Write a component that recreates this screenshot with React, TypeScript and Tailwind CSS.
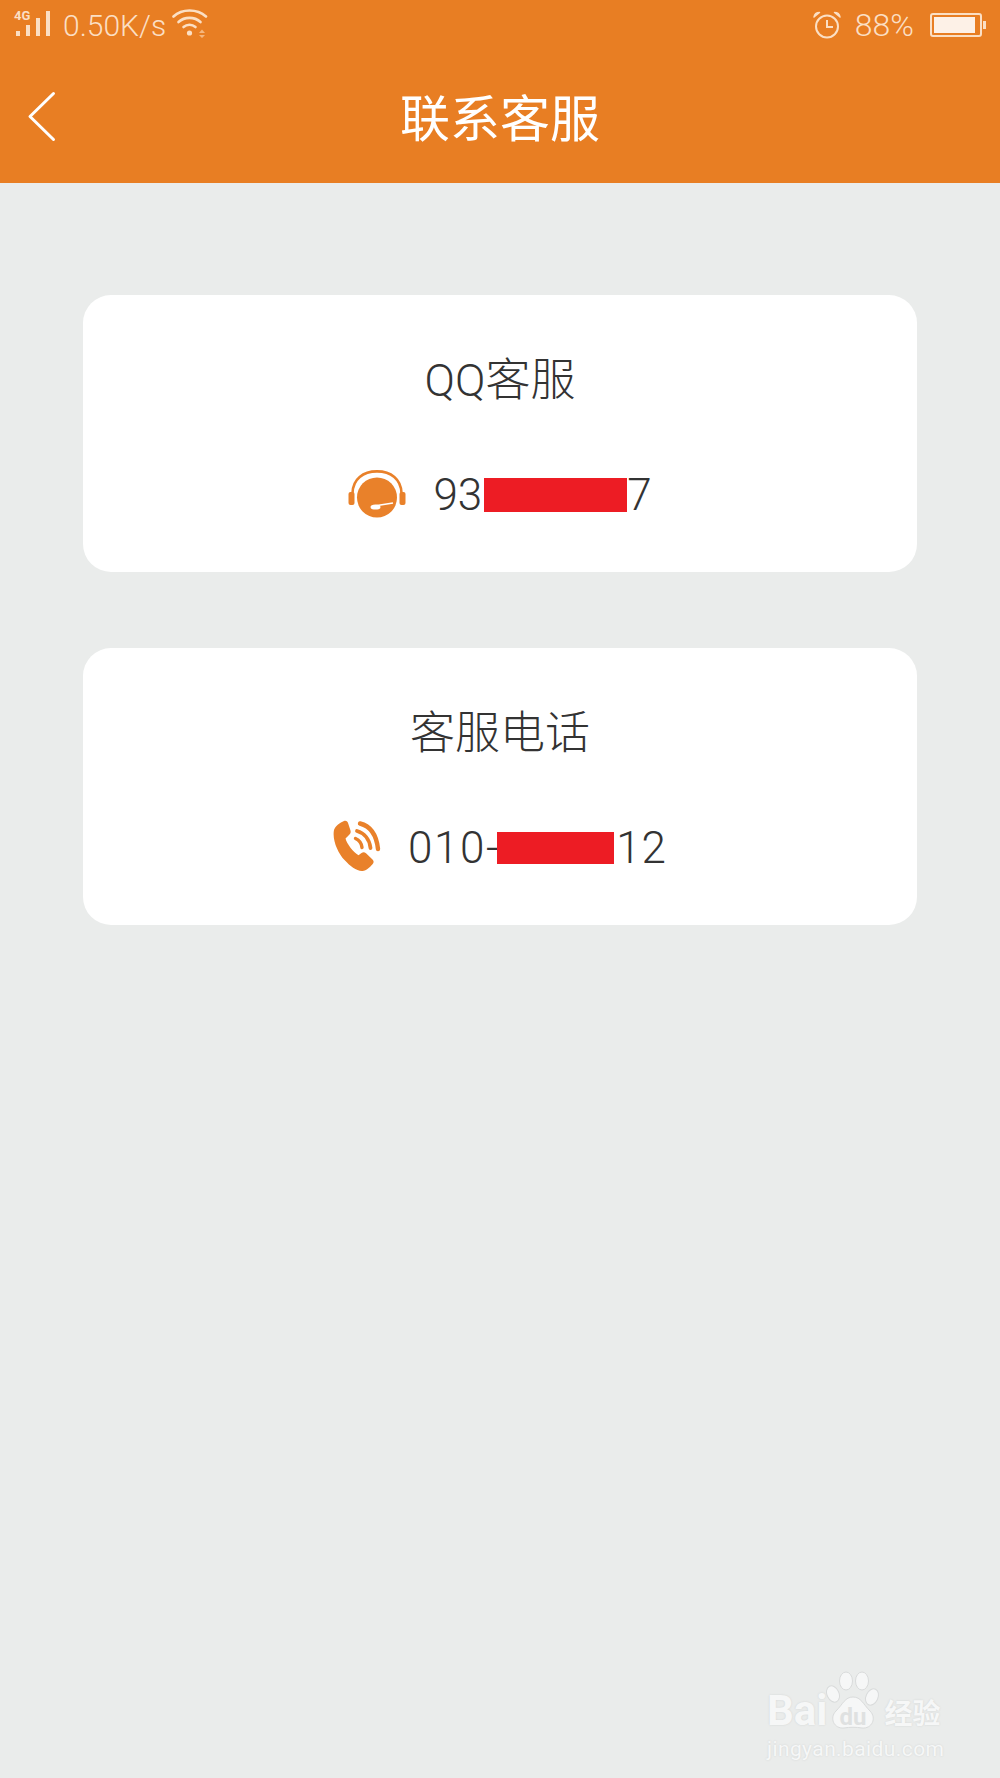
import type { ReactNode } from 'react';

const SANS = 'font-["Roboto","Noto_Sans_CJK_SC",sans-serif]';

function SignalIcon() {
  return (
    <svg width="40" height="26" viewBox="0 0 40 26" className="fill-[#fbdfc4]">
      <rect x="2" y="20" width="4" height="5" />
      <rect x="12" y="14" width="4" height="11" />
      <rect x="22" y="7" width="4" height="18" />
      <rect x="32" y="0" width="4" height="25" />
    </svg>
  );
}

function WifiIcon() {
  return (
    <svg width="36" height="30" viewBox="0 0 36 30" fill="none" className="stroke-[#fbdfc4]">
      <path d="M1.5 8.5C10 0.5 25 0.5 34 8.5" strokeWidth="2.6" strokeLinecap="round" />
      <path d="M6.5 14C12.5 8.5 22.5 8.5 28.5 14" strokeWidth="2.6" strokeLinecap="round" />
      <path d="M11.5 19C15 16 20 16 23.5 19" strokeWidth="2.6" strokeLinecap="round" />
      <circle cx="17.5" cy="25" r="2.6" className="fill-[#fbdfc4]" stroke="none" />
      <path d="M27 25L30 21.5L33 25ZM27 27L30 30L33 27Z" className="fill-[#f5b77f]" stroke="none" />
    </svg>
  );
}

function AlarmIcon() {
  return (
    <svg width="28" height="28" viewBox="0 0 28 28" fill="none" className="stroke-[#fbdfc4]">
      <circle cx="14" cy="15.5" r="11" strokeWidth="2" />
      <path d="M14 9V16H20" strokeWidth="2" />
      <path d="M1 6C1.5 3 3.5 1.5 6.5 1.5ZM27 6C26.5 3 24.5 1.5 21.5 1.5Z" className="fill-[#fbdfc4]" strokeWidth="1.5" strokeLinejoin="round" />
    </svg>
  );
}

function BatteryIcon() {
  return (
    <div className="flex items-center">
      <div className="flex h-[24px] w-[52px] items-center rounded-[3px] border-2 border-[#fbdfc4] p-[2px]">
        <div className="h-full w-[41px] bg-[#fdf1e7]" />
      </div>
      <div className="ml-[1px] h-[8px] w-[3px] bg-[#fbdfc4]" />
    </div>
  );
}

function HeadsetIcon() {
  return (
    <svg width="58" height="48" viewBox="0 0 58 48" className="text-[#e9812a]">
      <path d="M4.5 23C5 9 15 1.4 29 1.4C43 1.4 53 9 53.5 23" fill="none" stroke="currentColor" strokeWidth="2.6" />
      <rect x="0.5" y="22" width="6" height="13" rx="2" fill="currentColor" />
      <rect x="51.5" y="22" width="6" height="13" rx="2" fill="currentColor" />
      <circle cx="29" cy="27.5" r="20" fill="currentColor" />
      <path d="M26 36L45 33" stroke="#ffffff" strokeWidth="1.6" />
      <ellipse cx="27.5" cy="37" rx="5" ry="2.6" fill="#ffffff" />
    </svg>
  );
}

function PhoneIcon() {
  return (
    <svg width="48" height="52" viewBox="0 0 48 52" className="text-[#e9812a]">
      <path
        d="M1 10C2.5 6 7 2.5 11 1C13.5 0.5 14.5 1.5 15.2 3.5L17.5 10.5C18 12.5 17.4 13.8 16 15L12.5 18.5C14 24 20 32 25.5 35.2L28.5 33C30 32 31.5 32 33 33.2L39.5 39.5C41 41 41 42.5 39.5 44.2C37 47 33.5 50.5 29.5 51C24 51.5 17 46 11.5 40C5 33 -1 20 1 10Z"
        fill="currentColor"
      />
      <path d="M27 3.5C37 6 43.5 15 45 29" fill="none" stroke="currentColor" strokeWidth="4.4" strokeLinecap="round" />
      <path d="M24 11C31 13 36.5 19 37.5 28" fill="none" stroke="currentColor" strokeWidth="3.8" strokeLinecap="round" />
      <path d="M22.5 18.5C26 20 28.5 23 29 27.5" fill="none" stroke="currentColor" strokeWidth="3.4" strokeLinecap="round" />
    </svg>
  );
}

function BackIcon() {
  return (
    <svg width="30" height="52" viewBox="0 0 30 52" fill="none">
      <path d="M26.5 2.5L3 25.5L26.5 48.5" stroke="#ffffff" strokeWidth="3" strokeLinecap="round" strokeLinejoin="round" />
    </svg>
  );
}

function StatusBar() {
  return (
    <div className="flex h-[50px] items-center justify-between text-[#fbdfc4]">
      <div className="flex items-center pl-[14px]">
        <div className="relative mt-[-2px] h-[26px] w-[38px]">
          <SignalIcon />
          <span className="absolute left-0 top-[-3px] bg-[#e87e23] pr-[1px] text-[13px] font-bold leading-[15px] text-[#fbdfc4]">4G</span>
        </div>
        <span className="ml-[11px] mt-[2px] text-[30px] font-light leading-[50px]">0.50K/s</span>
        <span className="ml-[6px] mt-[-4px]"><WifiIcon /></span>
      </div>
      <div className="flex items-center pr-[14px]">
        <AlarmIcon />
        <span className="ml-[14px] text-[32px] font-light leading-[50px]">88%</span>
        <span className="ml-[16px]"><BatteryIcon /></span>
      </div>
    </div>
  );
}

function ContactCard({ title, children }: { title: string; children: ReactNode }) {
  return (
    <div className="flex h-[277px] flex-col items-center rounded-[28px] bg-white text-[#333333]">
      <h2 className="mt-[59px] text-[45px] font-light leading-[54px]">{title}</h2>
      <div className="mt-[57px] flex h-[60px] items-center text-[44px] font-light leading-[60px]">{children}</div>
    </div>
  );
}

function Watermark() {
  return (
    <div className="pointer-events-none absolute left-[767px] top-[1690px] w-[180px] text-[#f6f7f7] [text-shadow:0_0_2px_#cfd1d1]">
      <div className="flex items-end leading-none">
        <span className="text-[42px] font-bold leading-[42px]">Bai</span>
        <span className="relative ml-[2px] flex h-[42px] w-[50px] items-end justify-center">
          <svg width="56" height="62" viewBox="0 0 56 62" className="absolute bottom-[-1px] left-[-3px] fill-[#f6f7f7] stroke-[#d9dbdb]">
            <ellipse cx="7" cy="23" rx="6" ry="8.5" transform="rotate(-25 7 23)" />
            <ellipse cx="20" cy="10" rx="6.5" ry="9" />
            <ellipse cx="36" cy="10" rx="6.5" ry="9" />
            <ellipse cx="46" cy="26" rx="6" ry="8.5" transform="rotate(25 46 26)" />
            <path d="M27 26C35 26 37 33 44 40C51 47 46 58 36 57C30 56 24 56 18 57C8 58 3 47 10 40C17 33 19 26 27 26Z" />
          </svg>
          <span className="relative mb-[3px] ml-[-3px] text-[24px] font-bold leading-none text-[#dfe1e1] [text-shadow:none]">du</span>
        </span>
        <span className="ml-[5px] text-[28px] font-bold leading-[34px]">经验</span>
      </div>
      <div className="mt-[5px] whitespace-nowrap text-[21px] leading-[24px] tracking-[0.4px]">jingyan.baidu.com</div>
    </div>
  );
}

export default function App() {
  return (
    <div className={`relative h-[1778px] w-[1000px] overflow-hidden bg-[#eaeceb] ${SANS}`}>
      <header className="h-[183px] bg-[#e87e23]">
        <StatusBar />
        <div className="relative flex h-[133px] items-center justify-center pt-[6px]">
          <span className="absolute left-[27px] top-[41px]"><BackIcon /></span>
          <h1 className="text-[50px] leading-[60px] text-white">联系客服</h1>
        </div>
      </header>

      <main className="flex flex-col gap-[76px] px-[83px] pt-[112px]">
        <ContactCard title="QQ客服">
          <span className="mr-[27px] mt-[-2px]"><HeadsetIcon /></span>
          <span>93</span>
          <span className="ml-[2px] h-[34px] w-[143px] bg-[#ed1c24]" />
          <span>7</span>
        </ContactCard>
        <ContactCard title="客服电话">
          <span className="mr-[27px] mt-[-4px]"><PhoneIcon /></span>
          <span className="tracking-[1.6px]">010-</span>
          <span className="ml-[-3px] h-[32px] w-[117px] bg-[#ed1c24]" />
          <span className="ml-[2px] tracking-[1px]">12</span>
        </ContactCard>
      </main>

      <Watermark />
    </div>
  );
}
